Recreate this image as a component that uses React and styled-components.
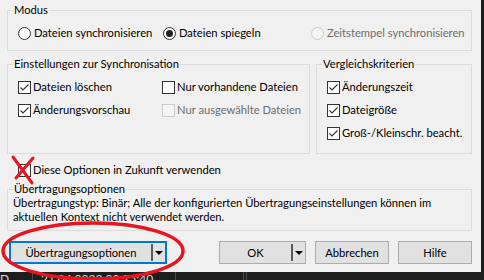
import React from 'react'
import styled, { createGlobalStyle } from 'styled-components'

const GlobalStyle = createGlobalStyle`
    html, body {
        margin: 0;
        padding: 0;
        background: #1e1e1e;
    }
    body {
        font-family: Lato, "Liberation Sans", sans-serif;
        font-size: 11.2px;
        line-height: 16px;
        color: #000;
    }
`

const Screen = styled.div`
    position: relative;
    width: 484px;
    height: 280px;
    overflow: hidden;
    display: grid;
    grid-template-columns: 481px 3px;
    grid-template-rows: 272px 8px;
    background: #1e1e1e;
`

const Dialog = styled.div`
    background: #f0f0f0;
    padding: 2px 9px 0 7px;
    display: flex;
    flex-direction: column;
`

const GroupBox = styled.fieldset`
    margin: 0;
    padding: 0;
    min-width: 0;
    border: 1px solid #dcdcdc;
    width: ${props => props.$width ? props.$width + 'px' : 'auto'};
    height: ${props => props.$height}px;
    box-sizing: border-box;
    flex: ${props => props.$grow ? '1' : 'none'};
`

const Legend = styled.legend`
    margin-left: 5px;
    padding: 0 1px;
    line-height: 16px;
    height: 16px;
`

const RadioRow = styled.div`
    display: grid;
    grid-template-columns: 145px 148px 1fr;
    padding: 7px 0 0 10px;
`

const CheckGrid = styled.div`
    display: grid;
    grid-template-columns: ${props => props.$cols || '1fr'};
    row-gap: 7px;
    padding: 7px 0 0 10px;
    align-content: start;
`

const Option = styled.label`
    display: flex;
    align-items: center;
    height: 16px;
    white-space: nowrap;
    color: ${props => props.$disabled ? '#6d6d6d' : '#000'};
`

const Circle = styled.span`
    flex: none;
    width: 13px;
    height: 13px;
    box-sizing: border-box;
    border-radius: 50%;
    border: 1px solid ${props => props.$disabled ? '#cccccc' : '#333'};
    background: ${props => props.$disabled ? '#f4f4f4' : '#fff'};
    margin-right: 3px;
    display: flex;
    align-items: center;
    justify-content: center;
    &::after {
        content: "";
        display: ${props => props.$checked ? 'block' : 'none'};
        width: 7px;
        height: 7px;
        border-radius: 50%;
        background: #222;
    }
`

const Box = styled.span`
    flex: none;
    width: 13px;
    height: 13px;
    box-sizing: border-box;
    border: 1px solid ${props => props.$disabled ? '#cccccc' : '#333'};
    background: ${props => props.$disabled ? '#f4f4f4' : '#fff'};
    margin-right: 2px;
    display: flex;
    svg {
        display: block;
    }
`

const Row = styled.div`
    display: flex;
    gap: 6px;
    margin-top: 5px;
`

const StandaloneCheck = styled.div`
    height: 16px;
    margin: 8px 0 3px 11px;
`

const InfoText = styled.div`
    margin-top: -1px;
    padding: 0 6px 0 5px;
    line-height: 14px;
    white-space: nowrap;
`

const ButtonBar = styled.div`
    display: flex;
    gap: 9px;
    margin-top: 10px;
    padding-left: 2px;
`

const Button = styled.button`
    font: inherit;
    color: #000;
    height: 23px;
    width: ${props => props.$width}px;
    box-sizing: border-box;
    background: #e1e1e1;
    border: ${props => props.$focused ? '2px solid #0078d7' : '1px solid #adadad'};
    border-radius: 0;
    padding: 0;
    margin-left: ${props => props.$push ? 'auto' : '0'};
    display: flex;
    align-items: center;
`

const ButtonLabel = styled.span`
    flex: 1;
    text-align: center;
    white-space: nowrap;
`

const SplitArrow = styled.span`
    flex: none;
    width: 12px;
    height: 17px;
    border-left: 2px solid #5a5a5a;
    display: flex;
    align-items: center;
    justify-content: center;
    &::after {
        content: "";
        border-left: 4px solid transparent;
        border-right: 4px solid transparent;
        border-top: 4px solid #000;
    }
`

const Strip = styled.div`
    background: #1e1e1e;
    grid-column: 1 / 3;
    display: flex;
    overflow: hidden;
    color: #d8d8d8;
    font-size: 12px;
    line-height: 16px;
`

const Cell = styled.span`
    width: ${props => props.$width}px;
    flex: none;
    margin-top: -1px;
    padding-left: ${props => props.$pad || 0}px;
    box-sizing: border-box;
    border-right: 1px solid #4a4a4a;
    white-space: nowrap;
    overflow: hidden;
`

const Annotation = styled.svg`
    position: absolute;
    left: 0;
    top: 0;
    pointer-events: none;
`

const Radio = ({ label, checked, disabled }) => (
    <Option $disabled={disabled}>
        <Circle $checked={checked} $disabled={disabled} />
        {label}
    </Option>
)

const Check = ({ label, checked, disabled }) => (
    <Option $disabled={disabled}>
        <Box $disabled={disabled}>
            {checked && (
                <svg width="11" height="11" viewBox="0 0 11 11">
                    <polyline points="1.5,5.5 4,8 9.5,2.5" fill="none" stroke="#333" strokeWidth="1.1" />
                </svg>
            )}
        </Box>
        {label}
    </Option>
)

const App = () => (
    <Screen>
        <GlobalStyle />
        <Dialog>
            <GroupBox $height={49}>
                <Legend>Modus</Legend>
                <RadioRow>
                    <Radio label="Dateien synchronisieren" />
                    <Radio label="Dateien spiegeln" checked />
                    <Radio label="Zeitstempel synchronisieren" disabled />
                </RadioRow>
            </GroupBox>
            <Row>
                <GroupBox $width={303} $height={98}>
                    <Legend>Einstellungen zur Synchronisation</Legend>
                    <CheckGrid $cols="144px 1fr">
                        <Check label="Dateien löschen" checked />
                        <Check label="Nur vorhandene Dateien" />
                        <Check label="Änderungsvorschau" checked />
                        <Check label="Nur ausgewählte Dateien" disabled />
                    </CheckGrid>
                </GroupBox>
                <GroupBox $height={98} $grow>
                    <Legend>Vergleichskriterien</Legend>
                    <CheckGrid>
                        <Check label="Änderungszeit" checked />
                        <Check label="Dateigröße" checked />
                        <Check label="Groß-/Kleinschr. beacht." checked />
                    </CheckGrid>
                </GroupBox>
            </Row>
            <StandaloneCheck>
                <Check label="Diese Optionen in Zukunft verwenden" />
            </StandaloneCheck>
            <GroupBox $height={50}>
                <Legend>Übertragungsoptionen</Legend>
                <InfoText>
                    Übertragungstyp: Binär; Alle der konfigurierten Übertragungseinstellungen können im<br />
                    aktuellen Kontext nicht verwendet werden.
                </InfoText>
            </GroupBox>
            <ButtonBar>
                <Button $width={158} $focused>
                    <ButtonLabel>Übertragungsoptionen</ButtonLabel>
                    <SplitArrow />
                </Button>
                <Button $width={87} $push>
                    <ButtonLabel>OK</ButtonLabel>
                    <SplitArrow />
                </Button>
                <Button $width={74}>
                    <ButtonLabel>Abbrechen</ButtonLabel>
                </Button>
                <Button $width={74}>
                    <ButtonLabel>Hilfe</ButtonLabel>
                </Button>
            </ButtonBar>
        </Dialog>
        <div />
        <Strip>
            <Cell $width={33}>D...</Cell>
            <Cell $width={143} $pad={8}>21.04.2023 02:25:40</Cell>
            <Cell $width={68} />
            <Cell $width={3} />
        </Strip>
        <Annotation width="484" height="280" viewBox="0 0 484 280">
            <g stroke="#e8141f" strokeLinecap="round" fill="none">
                <line x1="13" y1="157" x2="32" y2="183" strokeWidth="3" />
                <line x1="33" y1="158" x2="16" y2="178" strokeWidth="3" />
                <ellipse cx="93" cy="251" rx="90" ry="28" strokeWidth="3.5" />
            </g>
        </Annotation>
    </Screen>
)

export default App
